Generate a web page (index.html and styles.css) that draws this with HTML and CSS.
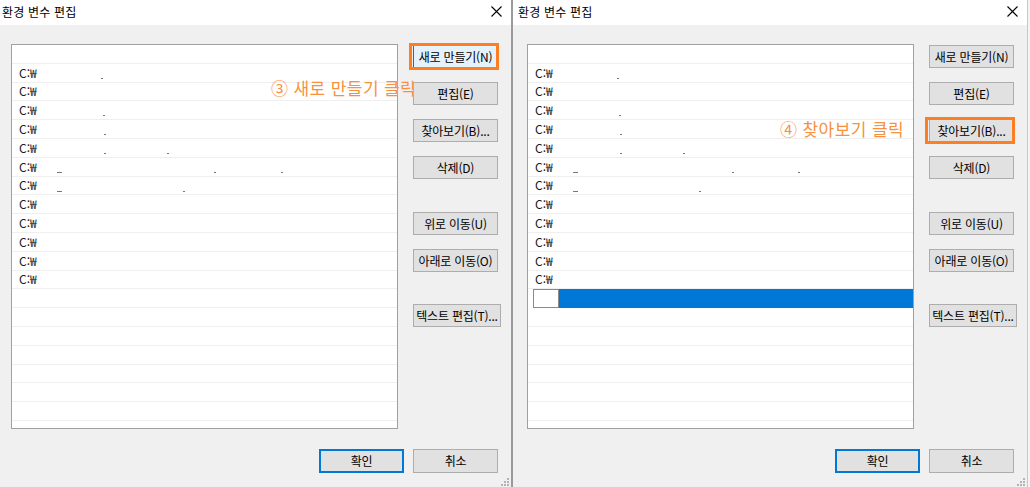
FILE: index.html
```html
<!DOCTYPE html>
<html lang="ko">
<head>
<meta charset="utf-8">
<title>환경 변수 편집</title>
<link rel="stylesheet" href="styles.css">
</head>
<body>
<div class="screen">
  <section class="dialog dlg-left">
    <header class="titlebar">
      <span class="title">환경 변수 편집</span>
      <svg class="close" width="11" height="11" viewBox="0 0 11 11"><path d="M0.5 0.5L10.5 10.5M10.5 0.5L0.5 10.5" stroke="#000" stroke-width="1.1" fill="none"/></svg>
    </header>
    <div class="body">
      <div class="main">
        <div class="list">
          <div class="row"></div>
          <div class="row"><span class="path">C:₩</span><i class="mk" style="left:89px"></i></div>
          <div class="row"><span class="path">C:₩</span></div>
          <div class="row"><span class="path">C:₩</span><i class="mk" style="left:91px"></i></div>
          <div class="row"><span class="path">C:₩</span><i class="mk" style="left:92px"></i></div>
          <div class="row"><span class="path">C:₩</span><i class="mk" style="left:92px"></i><i class="mk" style="left:155px"></i></div>
          <div class="row"><span class="path">C:₩</span><i class="mk dash" style="left:45px"></i><i class="mk" style="left:202px"></i><i class="mk" style="left:269px"></i></div>
          <div class="row"><span class="path">C:₩</span><i class="mk dash" style="left:45px"></i><i class="mk" style="left:171px"></i></div>
          <div class="row"><span class="path">C:₩</span></div>
          <div class="row"><span class="path">C:₩</span></div>
          <div class="row"><span class="path">C:₩</span></div>
          <div class="row"><span class="path">C:₩</span></div>
          <div class="row"><span class="path">C:₩</span></div>
          <div class="row"></div>
          <div class="row"></div>
          <div class="row"></div>
          <div class="row"></div>
          <div class="row"></div>
          <div class="row"></div>
          <div class="row"></div>
          <div class="row"></div>
          <div class="row"></div>
        </div>
        <div class="btns">
          <button class="btn hl hover">새로 만들기(N)</button>
          <button class="btn">편집(E)</button>
          <button class="btn">찾아보기(B)...</button>
          <button class="btn">삭제(D)</button>
          <button class="btn sep">위로 이동(U)</button>
          <button class="btn">아래로 이동(O)</button>
          <button class="btn sep wide">텍스트 편집(T)...</button>
        </div>
      </div>
      <div class="footer">
        <button class="btn ok">확인</button>
        <button class="btn">취소</button>
      </div>
    </div>
    <svg class="grip" width="10" height="10" viewBox="0 0 10 10"><g fill="#b4b4b4"><rect x="7" y="1" width="2" height="2"/><rect x="4" y="4" width="2" height="2"/><rect x="7" y="4" width="2" height="2"/><rect x="1" y="7" width="2" height="2"/><rect x="4" y="7" width="2" height="2"/><rect x="7" y="7" width="2" height="2"/></g></svg>
    <div class="note note-left">③ 새로 만들기 클릭</div>
  </section>

  <div class="seam"></div>

  <section class="dialog dlg-right">
    <header class="titlebar">
      <span class="title">환경 변수 편집</span>
      <svg class="close" width="11" height="11" viewBox="0 0 11 11"><path d="M0.5 0.5L10.5 10.5M10.5 0.5L0.5 10.5" stroke="#000" stroke-width="1.1" fill="none"/></svg>
    </header>
    <div class="body">
      <div class="main">
        <div class="list">
          <div class="row"></div>
          <div class="row"><span class="path">C:₩</span><i class="mk" style="left:89px"></i></div>
          <div class="row"><span class="path">C:₩</span></div>
          <div class="row"><span class="path">C:₩</span><i class="mk" style="left:91px"></i></div>
          <div class="row"><span class="path">C:₩</span><i class="mk" style="left:92px"></i></div>
          <div class="row"><span class="path">C:₩</span><i class="mk" style="left:92px"></i><i class="mk" style="left:155px"></i></div>
          <div class="row"><span class="path">C:₩</span><i class="mk dash" style="left:45px"></i><i class="mk" style="left:204px"></i><i class="mk" style="left:270px"></i></div>
          <div class="row"><span class="path">C:₩</span><i class="mk dash" style="left:45px"></i><i class="mk" style="left:171px"></i></div>
          <div class="row"><span class="path">C:₩</span></div>
          <div class="row"><span class="path">C:₩</span></div>
          <div class="row"><span class="path">C:₩</span></div>
          <div class="row"><span class="path">C:₩</span></div>
          <div class="row"><span class="path">C:₩</span></div>
          <div class="row sel"><span class="edit"></span><span class="fill"></span></div>
          <div class="row"></div>
          <div class="row"></div>
          <div class="row"></div>
          <div class="row"></div>
          <div class="row"></div>
          <div class="row"></div>
          <div class="row"></div>
          <div class="row"></div>
        </div>
        <div class="btns">
          <button class="btn">새로 만들기(N)</button>
          <button class="btn">편집(E)</button>
          <button class="btn hl">찾아보기(B)...</button>
          <button class="btn">삭제(D)</button>
          <button class="btn sep">위로 이동(U)</button>
          <button class="btn">아래로 이동(O)</button>
          <button class="btn sep wide">텍스트 편집(T)...</button>
        </div>
      </div>
      <div class="footer">
        <button class="btn ok">확인</button>
        <button class="btn">취소</button>
      </div>
    </div>
    <svg class="grip" width="10" height="10" viewBox="0 0 10 10"><g fill="#b4b4b4"><rect x="7" y="1" width="2" height="2"/><rect x="4" y="4" width="2" height="2"/><rect x="7" y="4" width="2" height="2"/><rect x="1" y="7" width="2" height="2"/><rect x="4" y="7" width="2" height="2"/><rect x="7" y="7" width="2" height="2"/></g></svg>
    <div class="note note-right">④ 찾아보기 클릭</div>
  </section>
  <div class="edge"></div>
</div>
</body>
</html>
```

FILE: styles.css
```css
html, body {
  margin: 0;
  padding: 0;
  width: 1030px;
  height: 487px;
  overflow: hidden;
  background: #f0f0f0;
}

body {
  font-family: "Noto Sans CJK KR", "Noto Sans", sans-serif;
  font-size: 12px;
  color: #000;
}

.screen {
  display: flex;
  width: 1030px;
  height: 487px;
  overflow: hidden;
}

.dialog {
  position: relative;
  flex: 0 0 514px;
  width: 514px;
  height: 487px;
  background: #f0f0f0;
  display: flex;
  flex-direction: column;
}

.dlg-left {
  margin-left: -3px;
}

.seam {
  flex: 0 0 2px;
  background: #9a9a9a;
}

.edge {
  flex: 0 0 3px;
  background: #f4f4f4;
  border-left: 1px solid #c8c8c8;
}

.titlebar {
  height: 25px;
  flex: 0 0 25px;
  background: #fff;
  display: flex;
  align-items: center;
  justify-content: space-between;
  padding: 0 9px 2px 5px;
  box-sizing: border-box;
}

.title {
  font-size: 12px;
  line-height: 16px;
  letter-spacing: 0.2px;
}

.close {
  display: block;
  margin-top: -1px;
}

.body {
  flex: 1;
  display: flex;
  flex-direction: column;
  padding: 19px 13px 0 14px;
}

.main {
  display: flex;
  align-items: flex-start;
}

.list {
  width: 387px;
  height: 385px;
  box-sizing: border-box;
  border: 1px solid #a0a0a0;
  background: #fff;
  overflow: hidden;
  display: flex;
  flex-direction: column;
}

.row {
  position: relative;
  flex: 0 0 18.8px;
  height: 18.8px;
  box-sizing: border-box;
  border-bottom: 1px solid #efefef;
  display: flex;
  align-items: center;
  padding-left: 7px;
}

.path {
  font-size: 12px;
  line-height: 16px;
  color: #1a1a1a;
}

.mk {
  position: absolute;
  top: 14px;
  width: 2px;
  height: 1px;
  background: #777;
}

.mk.dash {
  width: 5px;
}

.row.sel {
  padding-left: 5px;
  border-bottom: none;
  align-items: stretch;
}

.edit {
  width: 26px;
  box-sizing: border-box;
  border: 1px solid #8a8a8a;
  background: #fff;
}

.fill {
  flex: 1;
  background: #0078d7;
}

.btns {
  display: flex;
  flex-direction: column;
  gap: 14px;
  margin-left: 15px;
  margin-top: 1px;
  width: 85px;
}

.btn {
  position: relative;
  width: 85px;
  height: 23px;
  padding: 0;
  box-sizing: border-box;
  border: 1px solid #adadad;
  background: #e1e1e1;
  font-family: "Noto Sans CJK KR", "Noto Sans", sans-serif;
  font-size: 12px;
  line-height: 16px;
  color: #000;
  white-space: nowrap;
  text-align: center;
  letter-spacing: -0.2px;
}

.btn.sep {
  margin-top: 19px;
}

.btn.wide {
  width: 88px;
  margin-top: 18px;
}

.btn.hover {
  background: #e5f1fb;
  border-color: #0078d7;
}

.btn.hl::after {
  content: "";
  position: absolute;
  left: -5px;
  right: -2px;
  top: -3px;
  bottom: -3px;
  border: 3px solid #fd7f24;
}

.footer {
  display: flex;
  justify-content: flex-end;
  gap: 9px;
  margin-top: 20px;
}

.footer .btn {
  height: 24px;
}

.btn.ok {
  border: 2px solid #0078d7;
}

.grip {
  position: absolute;
  right: 1px;
  bottom: 0;
}

.note {
  position: absolute;
  font-size: 17px;
  line-height: 20px;
  letter-spacing: 0.4px;
  color: #f7913f;
  white-space: nowrap;
}

.note-left {
  left: 274px;
  top: 78px;
}

.note-right {
  left: 267px;
  top: 119px;
}
```
